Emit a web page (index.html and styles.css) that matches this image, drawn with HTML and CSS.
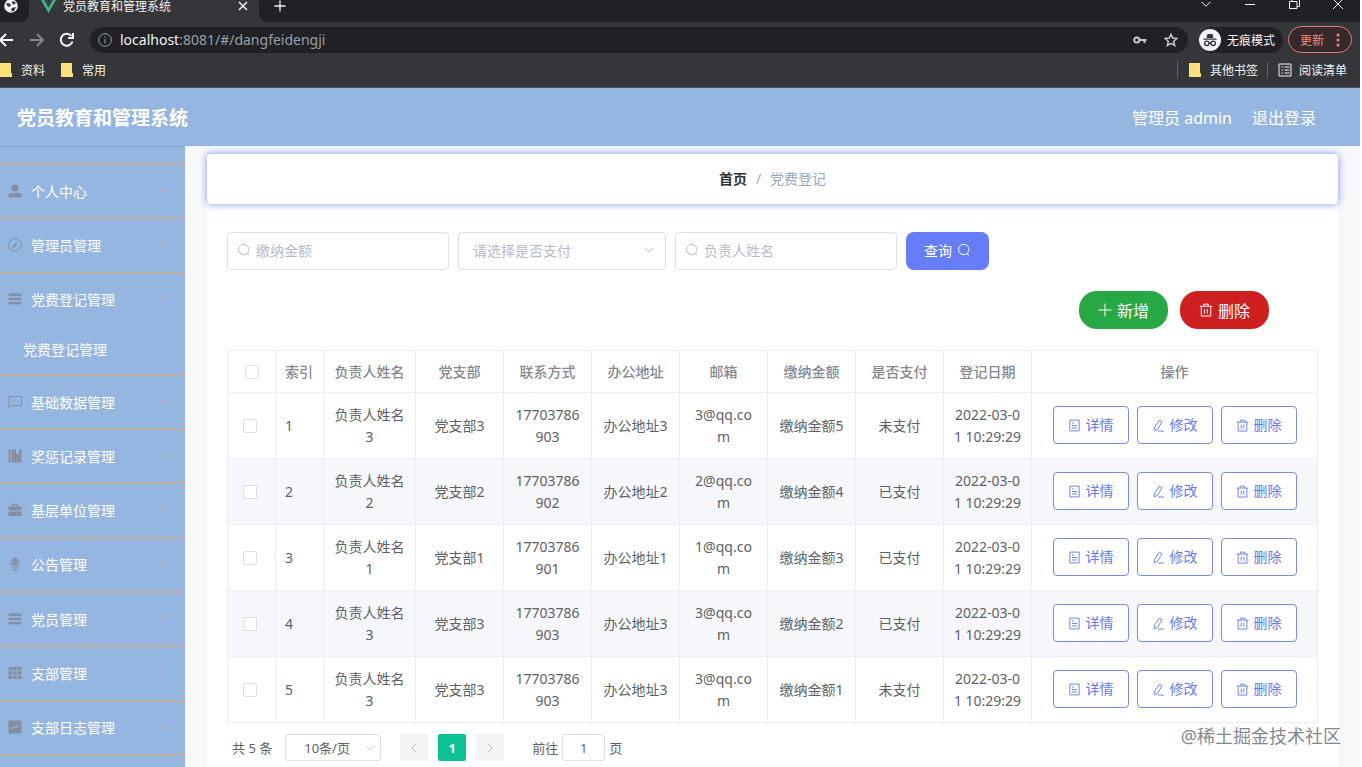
FILE: index.html
```html
<!DOCTYPE html>
<html lang="zh-CN">
<head>
    <meta charset="UTF-8">
    <meta name="viewport" content="width=device-width, initial-scale=1.0">
    <title>党员教育和管理系统</title>
    <link rel="stylesheet" href="styles.css">
</head>
<body>
    <!-- icons -->
    <svg class="sprite" aria-hidden="true">
        <symbol id="i-search" viewBox="0 0 14 14"><circle cx="6.7" cy="6.5" r="5.2"/><path d="M9.8 10.7l2.2 1.8"/></symbol>
        <symbol id="i-down" viewBox="0 0 14 14"><path d="M2.5 4.8L7 9.3l4.500-4.500"/></symbol>
        <symbol id="i-left" viewBox="0 0 14 14"><path d="M9 2.800L4.800 7 9 11.200"/></symbol>
        <symbol id="i-right" viewBox="0 0 14 14"><path d="M5 2.800L9.200 7 5 11.200"/></symbol>
        <symbol id="i-plus" viewBox="0 0 14 14"><path d="M7 .5v13M.5 7h13"/></symbol>
        <symbol id="i-close" viewBox="0 0 14 14"><path d="M3 3l8 8M11 3l-8 8"/></symbol>
        <symbol id="i-trash" viewBox="0 0 14 14"><path d="M.8 3.300h12.400M2.300 3.300v9.700h9.400V3.300M4.700 3V1.200h4.600V3M5.600 6v4.500M8.400 6v4.500"/></symbol>
        <symbol id="i-doc" viewBox="0 0 14 14"><path d="M2 1.200h10v11.600H2zM4.300 4.300h2.200M4.300 7h5.400M4.300 9.700h5.400"/></symbol>
        <symbol id="i-edit" viewBox="0 0 14 14"><path d="M8 1.200l2.800 1.800-4.800 8-3.600 1.800.4-4zM6.500 13h6.500"/></symbol>
        <symbol id="i-user" viewBox="0 0 14 14"><circle cx="7" cy="4" r="3.600"/><path d="M.5 13.500V11q0-2 2-2h9q2 0 2 2v2.500z"/></symbol>
        <symbol id="i-compass" viewBox="0 0 14 14"><circle cx="7" cy="7" r="6.300" fill="none" stroke="currentColor"/><path d="M10 3.500L8 8l-4 2.500L6 6z"/></symbol>
        <symbol id="i-menu" viewBox="0 0 14 14"><path d="M.5 1.500h13v2.400H.5zM.5 5.800h13v2.400H.5zM.5 10.100h13v2.400H.5z"/></symbol>
        <symbol id="i-chat" viewBox="0 0 14 14"><path d="M1 1.500h12.500v9H4L1 12.800zM4 6h1.200M6.600 6h1.200M9.200 6h1.200" fill="none" stroke="currentColor"/></symbol>
        <symbol id="i-book" viewBox="0 0 14 14"><path d="M.5.500h2v13h-2zM3.500.500H8v5l1.500-1.200L11 5.500v-5h2.500v13h-10z"/></symbol>
        <symbol id="i-bag" viewBox="0 0 14 14"><path d="M4 3.500V.800h6v2.700h3.500v4H.5v-4zM5.300 3.500h3.400V2H5.300zM.5 8.500h13V13H.5z" fill-rule="evenodd"/></symbol>
        <symbol id="i-mic" viewBox="0 0 14 14"><rect x="4.500" y=".5" width="5" height="8.500" rx="2.500"/><path d="M3 3v5q0 3 4 3t4-3V3M7 11v2M4 13.300h6" fill="none" stroke="currentColor"/></symbol>
        <symbol id="i-grid" viewBox="0 0 14 14"><path d="M.5 1h3.800v3.500H.5zM5.100 1h3.800v3.500H5.100zM9.700 1h3.800v3.500H9.700zM.5 5.300h3.800v3.500H.5zM5.100 5.300h3.800v3.500H5.100zM9.700 5.300h3.800v3.500H9.700zM.5 9.600h3.800v3.500H.5zM5.100 9.600h3.800v3.500H5.100zM9.700 9.600h3.800v3.500H9.700z"/></symbol>
        <symbol id="i-chart" viewBox="0 0 14 14"><path d="M.5.500h13v13H.5z"/><path d="M3.500 9l2.500-2.500L8 8l3-3.500" fill="none" stroke="#a9bbd6"/></symbol>
        <symbol id="i-folder" viewBox="0 0 12 14"><path d="M0 0h11v10h1v4H0z" fill="#fbe07c"/></symbol>
    </svg>

    <!-- browser frame -->
    <div class="browser">
        <div class="tabs">
            <div class="tab-side">
                <svg class="globe" viewBox="0 0 14 14"><circle cx="7" cy="7" r="6.800" fill="#f1f3f4"/><path d="M2 4l4 .5L7 6.500 5 8 3.500 7zM8.500 1.800l3.500 2-2 2-2-1.500zM8 9l4-1-2 4-2 .5-1-2z" fill="#35363a"/></svg>
            </div>
            <div class="tab-active">
                <svg class="vue" viewBox="0 0 14 14"><path d="M0 1h3l4 7 4-7h3L7 13z" fill="#41b883"/><path d="M3 1h2.500L7 3.800 8.500 1H11L7 8z" fill="#35495e"/></svg>
                <span>党员教育和管理系统</span>
                <svg class="ico tab-close"><use href="#i-close"/></svg>
            </div>
            <div class="tab-rest">
                <svg class="ico tab-new"><use href="#i-plus"/></svg>
                <div class="win">
                    <svg class="ico"><use href="#i-down"/></svg>
                    <svg class="ico" viewBox="0 0 14 14"><path d="M2 7.500h10"/></svg>
                    <svg class="ico" viewBox="0 0 14 14"><path d="M2.500 4.500h7.500v7H2.500zM5 4.500v-2.500h7.500v7.500H10"/></svg>
                    <svg class="ico" viewBox="0 0 14 14"><path d="M2 2l10 10M12 2L2 12"/></svg>
                </div>
            </div>
        </div>
        <div class="toolbar">
            <svg class="nav" viewBox="0 0 16 16"><path d="M14 8H1M7 2L1 8l6 6"/></svg>
            <svg class="nav off" viewBox="0 0 16 16"><path d="M1 8h13M8 2l6 6-6 6"/></svg>
            <svg class="nav" viewBox="0 0 16 16"><path d="M13.500 9.500A6 6 0 1 1 12.500 4M14 1v5H9"/></svg>
            <div class="address">
                <svg class="ico" viewBox="0 0 14 14"><circle cx="7" cy="7" r="6.300"/><path d="M7 6v4.500M7 3.300v1.400"/></svg>
                <span class="url"><b>localhost</b>:8081/#/dangfeidengji</span>
                <svg class="ico key" viewBox="0 0 14 14"><circle cx="3.800" cy="7" r="2.600"/><path d="M6.500 7h7M11.500 7v3"/></svg>
                <svg class="ico star" viewBox="0 0 14 14"><path d="M7 1.200l1.700 3.900 4.200.4-3.200 2.800 1 4.200L7 10.300l-3.700 2.200 1-4.200L1.100 5.500l4.200-.4z"/></svg>
            </div>
            <div class="incog">
                <svg viewBox="0 0 22 22"><circle cx="11" cy="11" r="11" fill="#f1f3f4"/><path d="M7.500 9L8.500 5h5l1 4zM4.500 9.500h13v1.300h-13z" fill="#35363a"/><g fill="none" stroke="#35363a" stroke-width="1.300"><circle cx="7.800" cy="14.300" r="2.200"/><circle cx="14.200" cy="14.300" r="2.200"/><path d="M10 14h2"/></g></svg>
                <span>无痕模式</span>
            </div>
            <button class="update">更新 <svg viewBox="0 0 4 14"><circle cx="2" cy="2" r="1.500"/><circle cx="2" cy="7" r="1.500"/><circle cx="2" cy="12" r="1.500"/></svg></button>
        </div>
        <div class="bookmarks">
            <svg class="folder"><use href="#i-folder"/></svg><span>资料</span>
            <svg class="folder second"><use href="#i-folder"/></svg><span>常用</span>
            <div class="bm-right">
                <svg class="folder"><use href="#i-folder"/></svg><span>其他书签</span>
                <i class="sep"></i>
                <svg class="ico" viewBox="0 0 14 14"><path d="M1 1h12v12H1zM3.500 4h1.500M6.500 4h5M3.500 7h1.500M6.500 7h5M3.500 10h1.500M6.500 10h5"/></svg><span>阅读清单</span>
            </div>
        </div>
    </div>

    <header class="header">
        <h1>党员教育和管理系统</h1>
        <span class="who">管理员 admin</span>
        <a href="#">退出登录</a>
    </header>

    <div class="layout">
        <nav class="side">
            <a class="item" href="#"><svg><use href="#i-user"/></svg>个人中心<svg class="arrow"><use href="#i-down"/></svg></a>
            <a class="item" href="#"><svg><use href="#i-compass"/></svg>管理员管理<svg class="arrow"><use href="#i-down"/></svg></a>
            <a class="item" href="#"><svg><use href="#i-menu"/></svg>党费登记管理<svg class="arrow"><use href="#i-down"/></svg></a>
            <a class="sub" href="#">党费登记管理</a>
            <a class="item" href="#"><svg><use href="#i-chat"/></svg>基础数据管理<svg class="arrow"><use href="#i-down"/></svg></a>
            <a class="item" href="#"><svg><use href="#i-book"/></svg>奖惩记录管理<svg class="arrow"><use href="#i-down"/></svg></a>
            <a class="item" href="#"><svg><use href="#i-bag"/></svg>基层单位管理<svg class="arrow"><use href="#i-down"/></svg></a>
            <a class="item" href="#"><svg><use href="#i-mic"/></svg>公告管理<svg class="arrow"><use href="#i-down"/></svg></a>
            <a class="item" href="#"><svg><use href="#i-menu"/></svg>党员管理<svg class="arrow"><use href="#i-down"/></svg></a>
            <a class="item" href="#"><svg><use href="#i-grid"/></svg>支部管理<svg class="arrow"><use href="#i-down"/></svg></a>
            <a class="item" href="#"><svg><use href="#i-chart"/></svg>支部日志管理<svg class="arrow"><use href="#i-down"/></svg></a>
            <div class="side-end"></div>
        </nav>

        <main class="main">
            <div class="crumb"><a href="#">首页</a><i>/</i><span>党费登记</span></div>

            <div class="content">
                <form class="search">
                    <label class="field"><svg class="ico"><use href="#i-search"/></svg><input type="text" placeholder="缴纳金额" aria-label="缴纳金额"></label>
                    <label class="field pick"><select aria-label="是否支付"><option>请选择是否支付</option><option>已支付</option><option>未支付</option></select><svg class="ico"><use href="#i-down"/></svg></label>
                    <label class="field"><svg class="ico"><use href="#i-search"/></svg><input type="text" placeholder="负责人姓名" aria-label="负责人姓名"></label>
                    <button type="button" class="query">查询<svg class="ico"><use href="#i-search"/></svg></button>
                </form>

                <div class="actions">
                    <button class="add"><svg class="ico"><use href="#i-plus"/></svg>新增</button>
                    <button class="del"><svg class="ico"><use href="#i-trash"/></svg>删除</button>
                </div>

                <table class="list">
                    <colgroup>
                        <col class="c-check"><col class="c-check"><col class="c-name"><col class="c"><col class="c"><col class="c"><col class="c"><col class="c"><col class="c"><col class="c"><col>
                    </colgroup>
                    <thead>
                        <tr>
                            <th><input type="checkbox" aria-label="全选"></th>
                            <th class="idx">索引</th>
                            <th>负责人姓名</th>
                            <th>党支部</th>
                            <th>联系方式</th>
                            <th>办公地址</th>
                            <th>邮箱</th>
                            <th>缴纳金额</th>
                            <th>是否支付</th>
                            <th>登记日期</th>
                            <th>操作</th>
                        </tr>
                    </thead>
                    <tbody>
                        <tr>
                            <td class="chk"><input type="checkbox" aria-label="选择 1"></td><td class="idx">1</td><td>负责人姓名3</td><td>党支部3</td><td>17703786903</td><td>办公地址3</td><td>3@qq.com</td><td>缴纳金额5</td><td>未支付</td><td>2022-03-01 10:29:29</td>
                            <td><div class="ops"><button><svg class="ico"><use href="#i-doc"/></svg>详情</button><button><svg class="ico"><use href="#i-edit"/></svg>修改</button><button><svg class="ico"><use href="#i-trash"/></svg>删除</button></div></td>
                        </tr>
                        <tr>
                            <td class="chk"><input type="checkbox" aria-label="选择 2"></td><td class="idx">2</td><td>负责人姓名2</td><td>党支部2</td><td>17703786902</td><td>办公地址2</td><td>2@qq.com</td><td>缴纳金额4</td><td>已支付</td><td>2022-03-01 10:29:29</td>
                            <td><div class="ops"><button><svg class="ico"><use href="#i-doc"/></svg>详情</button><button><svg class="ico"><use href="#i-edit"/></svg>修改</button><button><svg class="ico"><use href="#i-trash"/></svg>删除</button></div></td>
                        </tr>
                        <tr>
                            <td class="chk"><input type="checkbox" aria-label="选择 3"></td><td class="idx">3</td><td>负责人姓名1</td><td>党支部1</td><td>17703786901</td><td>办公地址1</td><td>1@qq.com</td><td>缴纳金额3</td><td>已支付</td><td>2022-03-01 10:29:29</td>
                            <td><div class="ops"><button><svg class="ico"><use href="#i-doc"/></svg>详情</button><button><svg class="ico"><use href="#i-edit"/></svg>修改</button><button><svg class="ico"><use href="#i-trash"/></svg>删除</button></div></td>
                        </tr>
                        <tr>
                            <td class="chk"><input type="checkbox" aria-label="选择 4"></td><td class="idx">4</td><td>负责人姓名3</td><td>党支部3</td><td>17703786903</td><td>办公地址3</td><td>3@qq.com</td><td>缴纳金额2</td><td>已支付</td><td>2022-03-01 10:29:29</td>
                            <td><div class="ops"><button><svg class="ico"><use href="#i-doc"/></svg>详情</button><button><svg class="ico"><use href="#i-edit"/></svg>修改</button><button><svg class="ico"><use href="#i-trash"/></svg>删除</button></div></td>
                        </tr>
                        <tr>
                            <td class="chk"><input type="checkbox" aria-label="选择 5"></td><td class="idx">5</td><td>负责人姓名3</td><td>党支部3</td><td>17703786903</td><td>办公地址3</td><td>3@qq.com</td><td>缴纳金额1</td><td>未支付</td><td>2022-03-01 10:29:29</td>
                            <td><div class="ops"><button><svg class="ico"><use href="#i-doc"/></svg>详情</button><button><svg class="ico"><use href="#i-edit"/></svg>修改</button><button><svg class="ico"><use href="#i-trash"/></svg>删除</button></div></td>
                        </tr>
                    </tbody>
                </table>

                <div class="pager">
                    <span>共 5 条</span>
                    <label class="size"><select aria-label="每页条数"><option>10条/页</option><option>20条/页</option></select><svg class="ico"><use href="#i-down"/></svg></label>
                    <div class="pages">
                        <button aria-label="上一页"><svg class="ico"><use href="#i-left"/></svg></button>
                        <button class="on">1</button>
                        <button aria-label="下一页"><svg class="ico"><use href="#i-right"/></svg></button>
                    </div>
                    <label class="jump">前往<input type="text" value="1">页</label>
                </div>
            </div>
        </main>
    </div>
    <div class="watermark">@稀土掘金技术社区</div>
</body>
</html>
```

FILE: styles.css
```css
* {
    box-sizing: border-box;
}
body {
    margin: 0;
    padding-right: 2px;
    height: 100vh;
    display: flex;
    flex-direction: column;
    overflow: hidden;
    background: #fff;
    font-family: "Noto Sans", "Noto Sans CJK SC", sans-serif;
    font-size: 14px;
    color: #606266;
}
a {
    color: inherit;
    text-decoration: none;
}
i {
    font-style: normal;
}
button, input, select {
    font: inherit;
    color: inherit;
}
button {
    display: flex;
    align-items: center;
    justify-content: center;
    padding: 0;
    border: none;
    cursor: pointer;
}
.sprite {
    display: none;
}
.ico {
    flex: none;
    width: 14px;
    height: 14px;
    fill: none;
    stroke: currentColor;
}

/* browser frame */
.browser {
    flex: none;
    background: #35363a;
    border-bottom: 1px solid #45505e;
    color: #f1f3f4;
    font-size: 12px;
}
.tabs {
    display: flex;
    height: 22px;
}
.tab-side, .tab-active, .tab-rest {
    display: flex;
    align-items: center;
    padding-bottom: 10px;
}
.tab-side {
    width: 29px;
    padding-left: 4px;
    background: #202124;
    border-bottom-right-radius: 8px;
}
.globe {
    width: 14px;
    height: 14px;
}
.tab-active {
    width: 230px;
    padding-left: 12px;
    padding-right: 9px;
}
.vue {
    width: 15px;
    height: 15px;
    margin-right: 7px;
}
.tab-close {
    margin-left: auto;
}
.tab-close, .tab-new {
    stroke-width: 1.5;
}
.tab-new {
    width: 12px;
    height: 12px;
}
.tab-rest {
    flex: 1;
    padding-left: 15px;
    background: #202124;
    border-bottom-left-radius: 8px;
}
.win {
    margin-left: auto;
    margin-right: 15px;
    padding-bottom: 4px;
    display: flex;
    gap: 30px;
}
.toolbar {
    display: flex;
    align-items: center;
    height: 35px;
    padding-right: 8px;
}
.nav {
    width: 16px;
    height: 16px;
    margin-right: 15px;
    margin-left: -1px;
    fill: none;
    stroke: #f1f3f4;
    stroke-width: 2;
}
.nav.off {
    stroke: #85878b;
}
.address {
    flex: 1;
    display: flex;
    align-items: center;
    height: 26px;
    padding: 0 10px 0 8px;
    border-radius: 13px;
    background: #202124;
    color: #9aa0a6;
}
.url {
    flex: 1;
    margin-left: 8px;
    font-size: 14px;
}
.url b {
    font-weight: normal;
    color: #f1f3f4;
}
.key, .star {
    margin-left: 17px;
    color: #c4c7c9;
    stroke-width: 1.5;
}
.key {
    stroke-width: 2;
}
.incog {
    display: flex;
    align-items: center;
    gap: 6px;
    margin: 0 5px 0 11px;
    padding-right: 8px;
    border-radius: 13px;
    background: #202124;
    height: 26px;
}
.incog svg {
    width: 22px;
    height: 22px;
}
.update {
    gap: 12px;
    width: 64px;
    height: 27px;
    border: 1px solid #e57f76;
    border-radius: 14px;
    background: #35292b;
    color: #f28b82;
}
.update svg {
    width: 4px;
    height: 14px;
    fill: #f28b82;
}
.bookmarks {
    display: flex;
    align-items: center;
    height: 30px;
    padding-bottom: 4px;
}
.folder {
    width: 12px;
    height: 14px;
    margin-right: 9px;
}
.folder.second {
    margin-left: 16px;
}
.bm-right {
    display: flex;
    align-items: center;
    margin-left: auto;
    margin-right: 13px;
    padding-left: 11px;
    border-left: 1px solid #5f6368;
}
.bm-right .ico {
    margin-right: 7px;
}
.sep {
    width: 1px;
    height: 16px;
    margin: 0 10px 0 9px;
    background: #5f6368;
}

/* page header */
.header {
    flex: none;
    display: flex;
    align-items: center;
    height: 58px;
    padding: 0 44px 0 17px;
    background: #95b6e1;
    color: #fff;
    font-size: 16px;
}
.header h1 {
    margin: 0;
    font-size: 19px;
}
.who {
    margin-left: auto;
    margin-right: 20px;
}
.layout {
    flex: 1;
    display: flex;
    min-height: 0;
}

/* side menu */
.side {
    flex: none;
    display: flex;
    flex-direction: column;
    width: 185px;
    padding-top: 16px;
    border-top: 1px solid #88a9d4;
    background: #95b6e1;
    color: #fff;
}
.item {
    flex: 1;
    display: flex;
    align-items: center;
    padding: 0 16px 1px 8px;
    border-top: 2px solid #bcaca6;
}
.item svg {
    width: 14px;
    height: 14px;
    margin-right: 9px;
    color: #8490a2;
    fill: currentColor;
}
.item .arrow {
    width: 12px;
    height: 12px;
    margin: 0 0 2px auto;
    fill: none;
    stroke: #d0a6a8;
}
.sub {
    flex: none;
    height: 48px;
    padding-left: 23px;
    line-height: 48px;
}
.side-end {
    flex: none;
    height: 13px;
    border-top: 2px solid #bcaca6;
}

/* main */
.main {
    flex: 1;
    display: flex;
    flex-direction: column;
    min-width: 0;
    padding: 8px 22px 0;
    background: #f6f8fa;
}
.crumb {
    z-index: 1;
    flex: none;
    display: flex;
    align-items: center;
    justify-content: center;
    gap: 9px;
    height: 50px;
    padding-bottom: 2px;
    border-radius: 4px;
    background: #fff;
    box-shadow: 0 0 7px 1px #99a5ee;
    color: #97a8be;
}
.crumb a {
    font-weight: bold;
    color: #303133;
}
.crumb i {
    color: #a0a5b0;
}
.content {
    flex: 1;
    padding: 28px 20px 0;
    background: #fff;
}
.search {
    display: flex;
    gap: 9px;
}
.field {
    display: flex;
    align-items: center;
    width: 222px;
    height: 38px;
    padding: 0 9px 2px;
    border: 1px solid #dcdfe6;
    border-radius: 4px;
    color: #b8bcc4;
}
.field input {
    flex: 1;
    min-width: 0;
    padding: 0 5px;
    border: none;
    outline: none;
    background: none;
}
.field input::placeholder {
    color: #b8bcc4;
}
.pick {
    width: 208px;
    padding-left: 14px;
}
.field select, .size select {
    flex: 1;
    min-width: 0;
    padding: 0;
    border: none;
    outline: none;
    background: none;
    appearance: none;
}
.query {
    gap: 5px;
    width: 83px;
    padding-bottom: 2px;
    border-radius: 8px;
    background: #667df9;
    color: #fff;
}
.actions {
    display: flex;
    justify-content: flex-end;
    gap: 12px;
    margin: 21px 49px 21px 0;
}
.actions button {
    gap: 5px;
    width: 89px;
    height: 38px;
    border-radius: 18px;
    color: #fff;
    font-size: 16px;
}
.actions .add {
    background: #28a745;
}
.actions .del {
    background: #ce2020;
}

/* table */
.list {
    width: 100%;
    table-layout: fixed;
    border-collapse: collapse;
    line-height: 22px;
    text-align: center;
}
.c-check {
    width: 48px;
}
.c-name {
    width: 92px;
}
.c {
    width: 88px;
}
.list th, .list td {
    padding: 0 9px;
    border: 1px solid #ebeef5;
    word-break: break-all;
}
.list th {
    height: 42px;
    color: #85888f;
    font-weight: 500;
}
.list td {
    height: 66px;
}
.list tbody tr:nth-child(even) {
    background: #f5f7fa;
}
.list .idx {
    padding-right: 0;
    text-align: left;
}
.list .chk {
    padding-left: 15px;
    text-align: left;
}
.list input {
    display: block;
    width: 14px;
    height: 14px;
    margin: 0 auto;
    border: 1px solid #dcdfe6;
    border-radius: 2px;
    background: #fff;
    appearance: none;
}
.list .chk input {
    margin: 0;
}
.ops {
    display: flex;
    justify-content: center;
    gap: 8px;
    padding-bottom: 1px;
}
.ops button {
    gap: 5px;
    height: 38px;
    padding: 0 14px;
    border: 1px solid #7b8cdf;
    border-radius: 4px;
    background: #fff;
    color: #667bea;
}
.ops .ico {
    width: 13px;
    height: 13px;
}

/* pager */
.pager {
    display: flex;
    align-items: center;
    margin-top: 11px;
    padding-left: 5px;
    font-size: 13px;
}
.size {
    display: flex;
    align-items: center;
    width: 96px;
    height: 27px;
    margin-left: 13px;
    padding: 0 4px 0 18px;
    border: 1px solid #dcdfe6;
    border-radius: 3px;
}
.size .ico {
    width: 12px;
    height: 12px;
    color: #c0c4cc;
}
.pages {
    display: flex;
    gap: 10px;
    margin: 0 28px 0 19px;
}
.pages button {
    width: 28px;
    height: 27px;
    border-radius: 2px;
    background: #f4f4f5;
    color: #b4b8c0;
}
.pages .on {
    background: #0cc194;
    color: #fff;
    font-weight: bold;
}
.jump {
    display: flex;
    align-items: center;
    gap: 4px;
}
.jump input {
    width: 43px;
    height: 27px;
    padding: 0;
    border: 1px solid #dcdfe6;
    border-radius: 3px;
    text-align: center;
}

.watermark {
    position: absolute;
    right: 21px;
    bottom: 18px;
    font-size: 18px;
    line-height: 26px;
    color: #85888c;
}
```
